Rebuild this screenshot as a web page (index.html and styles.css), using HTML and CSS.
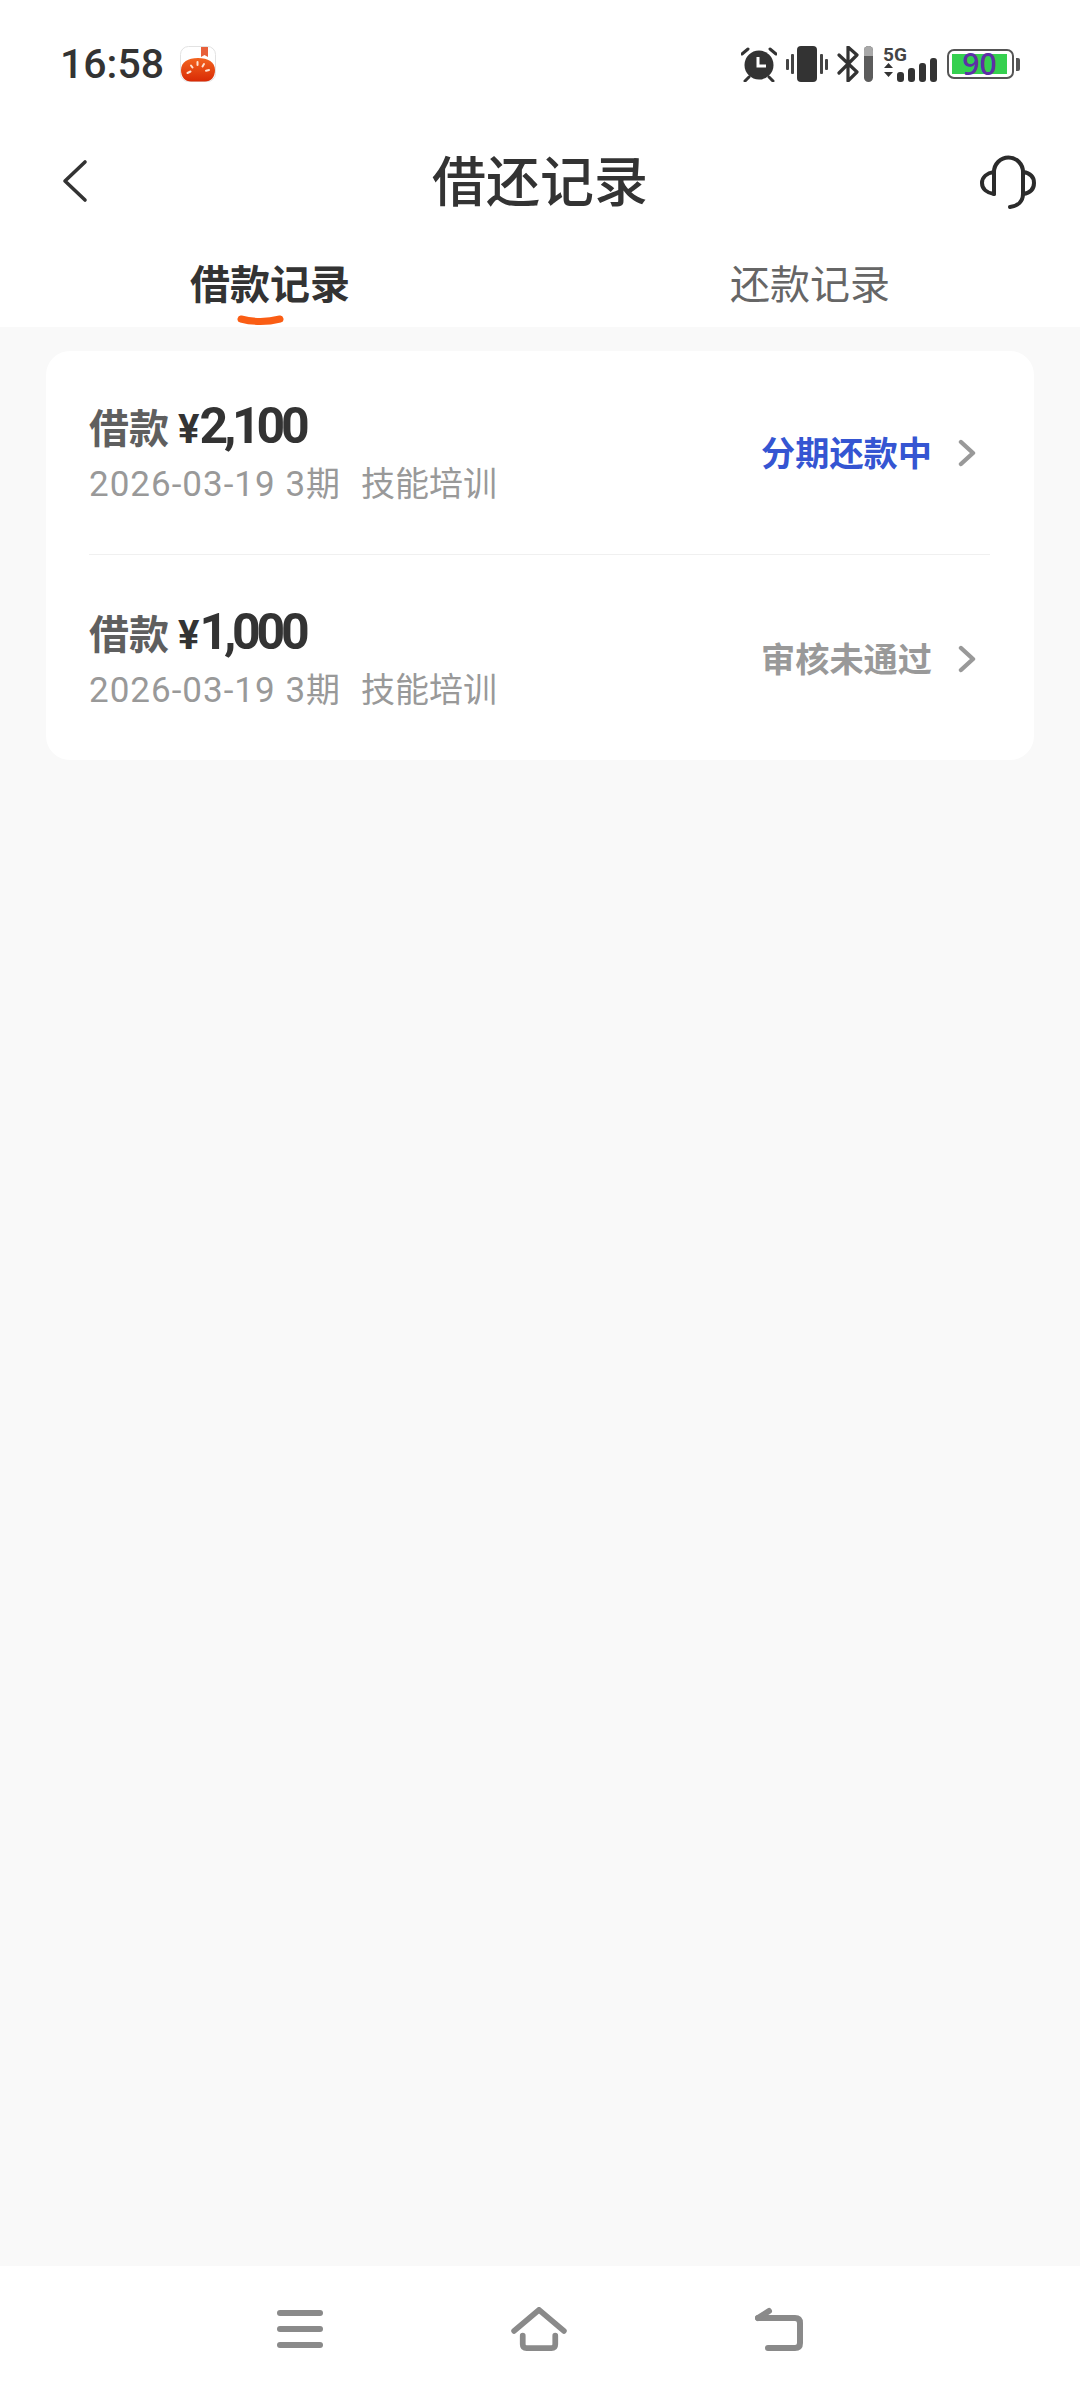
FILE: index.html
```html
<!DOCTYPE html>
<html lang="zh-CN">
<head>
    <meta charset="UTF-8">
    <meta name="viewport" content="width=device-width, initial-scale=1.0">
    <title>借还记录</title>
    <link rel="stylesheet" href="styles.css">
</head>
<body>
    <div class="status-bar">
        <div class="status-left">
            <span class="clock">16:58</span>
            <svg class="app-icon" width="36" height="36" viewBox="0 0 36 36">
                <defs>
                    <linearGradient id="tomato" x1="0" y1="0" x2="0" y2="1">
                        <stop offset="0" stop-color="#f2641f"/>
                        <stop offset="1" stop-color="#d92a05"/>
                    </linearGradient>
                </defs>
                <rect x="0.5" y="0.5" width="35" height="35" rx="8" fill="#fff" stroke="#e2e2e2"/>
                <path d="M21 1h7v10l-3.500-2-3.500 2z" fill="#e8603a"/>
                <path d="M1 24c0-8 7-12 17-12s17 4 17 12c0 7-4 11.500-10 11.500H11C5 35.500 1 31 1 24z" fill="url(#tomato)"/>
                <g stroke="#ffe3d2" stroke-width="2" stroke-linecap="round">
                    <path d="M17.500 16v3"/>
                    <path d="M24 18l-1.500 2.500"/>
                    <path d="M29 24l-3 .8"/>
                    <path d="M11 19.500l1.500 2"/>
                    <path d="M7.500 27l3-1.500"/>
                </g>
            </svg>
        </div>
        <div class="status-right">
            <svg width="36" height="36" viewBox="0 0 36 36">
                <circle cx="18" cy="19" r="14.500" fill="#333"/>
                <path d="M17 11v9h8" fill="none" stroke="#fff" stroke-width="3"/>
                <g stroke="#333" stroke-width="3" stroke-linecap="round">
                    <path d="M1 8l6-5"/>
                    <path d="M35 8l-6-5"/>
                    <path d="M8 31l-4 4"/>
                    <path d="M28 31l4 4"/>
                </g>
            </svg>
            <svg width="42" height="36" viewBox="0 0 42 36">
                <rect x="11" y="0" width="20" height="36" rx="4" fill="#333"/>
                <rect x="0" y="13" width="3" height="11" rx="1" fill="#444"/>
                <rect x="5" y="8" width="3" height="20" rx="1" fill="#444"/>
                <rect x="34" y="8" width="3" height="20" rx="1" fill="#444"/>
                <rect x="39" y="13" width="3" height="11" rx="1" fill="#444"/>
            </svg>
            <svg width="36" height="36" viewBox="0 0 36 36">
                <path d="M2 9l18 17-9 9V1l9 8L2 27" fill="none" stroke="#333" stroke-width="3.200" stroke-linejoin="round" stroke-linecap="round"/>
                <rect x="27" y="0" width="9" height="36" rx="4.500" fill="#5c5c5c"/>
                <path d="M27 10V4.500a4.500 4.500 0 0 1 9 0V10z" fill="#a8a8a8"/>
            </svg>
            <div class="net">
                <span class="net-label">5G</span>
                <svg width="54" height="24" viewBox="0 0 54 24">
                    <path d="M1 10l4.500-5 4.500 5zM1 14h9l-4.500 5z" fill="#333"/>
                    <rect x="14" y="14" width="7" height="10" rx="3" fill="#333"/>
                    <rect x="25" y="10" width="7" height="14" rx="3" fill="#333"/>
                    <rect x="36" y="5" width="7" height="19" rx="3" fill="#333"/>
                    <rect x="47" y="0" width="7" height="24" rx="3" fill="#333"/>
                </svg>
            </div>
            <div class="battery">
                <div class="battery-body">
                    <div class="battery-fill"><span>90</span></div>
                </div>
                <div class="battery-tip"></div>
            </div>
        </div>
    </div>

    <div class="title-bar">
        <svg class="back-icon" width="26" height="44" viewBox="0 0 26 44">
            <path d="M23 3L3 22l20 19" fill="none" stroke="#333" stroke-width="3.600" stroke-linecap="round" stroke-linejoin="round"/>
        </svg>
        <h1>借还记录</h1>
        <svg class="help-icon" width="56" height="56" viewBox="0 0 56 56">
            <g fill="none" stroke="#2b2b2b" stroke-width="4" stroke-linecap="round" stroke-linejoin="round">
                <path d="M14 41V19a14.500 14.500 0 0 1 29 0v22c0 7-5 12-13 13"/>
                <path d="M14 19C7 20 2 24 2 30s5 10 12 11"/>
                <path d="M43 19c7 1 11 5 11 11s-4 10-11 11"/>
            </g>
        </svg>
    </div>

    <div class="tabs">
        <div class="tab tab-active">借款记录
            <svg class="tab-line" width="47" height="12" viewBox="0 0 47 12">
                <path d="M4 4Q23.500 9 43 4" fill="none" stroke="#fa5d14" stroke-width="7" stroke-linecap="round"/>
            </svg>
        </div>
        <div class="tab">还款记录</div>
    </div>

    <div class="content">
        <div class="card">
            <div class="row">
                <div class="row-main">
                    <div class="row-title"><span class="row-label">借款</span><span class="row-yen">¥</span><span class="row-amount">2,100</span></div>
                    <div class="row-sub"><span class="row-date">2026-03-19 3</span>期<span class="row-use">技能培训</span></div>
                </div>
                <div class="row-state state-repaying">分期还款中</div>
                <svg class="row-arrow" width="18" height="28" viewBox="0 0 18 28">
                    <path d="M3 3l12 11L3 25" fill="none" stroke="#999" stroke-width="4.400" stroke-linecap="round" stroke-linejoin="round"/>
                </svg>
            </div>
            <div class="row">
                <div class="row-main">
                    <div class="row-title"><span class="row-label">借款</span><span class="row-yen">¥</span><span class="row-amount">1,000</span></div>
                    <div class="row-sub"><span class="row-date">2026-03-19 3</span>期<span class="row-use">技能培训</span></div>
                </div>
                <div class="row-state state-rejected">审核未通过</div>
                <svg class="row-arrow" width="18" height="28" viewBox="0 0 18 28">
                    <path d="M3 3l12 11L3 25" fill="none" stroke="#999" stroke-width="4.400" stroke-linecap="round" stroke-linejoin="round"/>
                </svg>
            </div>
        </div>
    </div>

    <div class="nav-bar">
        <svg width="46" height="38" viewBox="0 0 46 38">
            <g stroke="#8a8a8a" stroke-width="6" stroke-linecap="round">
                <path d="M3 3h40"/>
                <path d="M3 19h40"/>
                <path d="M3 35h40"/>
            </g>
        </svg>
        <svg class="nav-home" width="56" height="44" viewBox="0 0 58 46">
            <g fill="none" stroke="#8a8a8a" stroke-width="6" stroke-linecap="round" stroke-linejoin="round">
                <path d="M3 25L29 3l26 22"/>
                <path d="M12 30v9q0 4 4 4h26q4 0 4-4v-9"/>
            </g>
        </svg>
        <svg width="48" height="44" viewBox="0 0 48 44">
            <g fill="none" stroke="#8a8a8a" stroke-width="6" stroke-linecap="round" stroke-linejoin="round">
                <path d="M3 11h37q5 0 5 5v20q0 5-5 5H13"/>
                <path d="M3 11l11-7"/>
            </g>
        </svg>
    </div>
</body>
</html>
```

FILE: styles.css
```css
* {
    margin: 0;
    padding: 0;
    box-sizing: border-box;
}

body {
    width: 1080px;
    height: 2392px;
    display: flex;
    flex-direction: column;
    font-family: "Noto Sans CJK SC", "Noto Sans", sans-serif;
    background: #fff;
    color: #333;
}

.status-bar {
    height: 112px;
    padding: 16px 60px 0 60px;
    display: flex;
    align-items: center;
    justify-content: space-between;
}

.status-left {
    display: flex;
    align-items: center;
    gap: 16px;
}

.clock {
    font-family: Roboto, sans-serif;
    font-size: 41px;
    font-weight: 500;
    color: #333;
}

.status-right {
    display: flex;
    align-items: center;
    gap: 9px;
}

.net {
    width: 54px;
    height: 36px;
    margin-left: 1px;
    position: relative;
}

.net svg {
    position: absolute;
    left: 0;
    bottom: 0;
}

.net-label {
    position: absolute;
    left: 0;
    top: -3px;
    font-family: Roboto, sans-serif;
    font-size: 19px;
    font-weight: 700;
    color: #444;
}

.battery {
    display: flex;
    align-items: center;
    gap: 2px;
    margin-left: 1px;
}

.battery-body {
    width: 67px;
    height: 30px;
    padding: 3px;
    border: 2px solid #555;
    border-radius: 7px;
}

.battery-fill {
    width: 55px;
    height: 20px;
    background: #35d04f;
    display: flex;
    align-items: center;
    justify-content: center;
}

.battery-fill span {
    font-family: "Open Sans", sans-serif;
    font-size: 30px;
    font-weight: 600;
    line-height: 20px;
    color: #5e2fa6;
}

.battery-tip {
    width: 4px;
    height: 13px;
    background: #555;
    border-radius: 0 2px 2px 0;
}

.title-bar {
    height: 140px;
    padding: 0 44px 3px 62px;
    display: flex;
    align-items: center;
    justify-content: space-between;
    position: relative;
}

.title-bar h1 {
    position: absolute;
    left: 0;
    right: 0;
    padding-bottom: 4px;
    text-align: center;
    font-size: 54px;
    font-weight: 500;
    color: #333;
}

.tabs {
    height: 75px;
    display: grid;
    grid-template-columns: 1fr 1fr;
}

.tab {
    position: relative;
    text-align: center;
    font-size: 40px;
    line-height: 61px;
    color: #666;
}

.tab-active {
    font-weight: 700;
    color: #333;
}

.tab-line {
    position: absolute;
    left: 237px;
    bottom: 0;
}

.content {
    flex: 1;
    padding: 24px 46px 0;
    background: #f9f9f9;
}

.card {
    padding: 0 44px 0 43px;
    background: #fff;
    border-radius: 24px;
}

.row {
    height: 204px;
    display: flex;
    align-items: center;
    border-bottom: 1px solid #f0f0f0;
    padding-right: 14px;
}

.row:last-child {
    height: 205px;
    padding-top: 2px;
    border-bottom: none;
}

.row-main {
    flex: 1;
}

.row-title {
    display: flex;
    align-items: baseline;
    height: 60px;
    padding-top: 2px;
    color: #333;
}

.row-label {
    font-size: 40px;
    font-weight: 700;
    color: #5f5f5f;
    margin-right: 9px;
}

.row-yen {
    font-family: Roboto, sans-serif;
    font-size: 40px;
    font-weight: 700;
}

.row-amount {
    font-family: Roboto, sans-serif;
    font-size: 50px;
    font-weight: 700;
    letter-spacing: -4.200px;
}

.row-sub {
    margin-top: 2px;
    font-size: 34px;
    line-height: 50px;
    color: #999;
}

.row-date {
    font-family: Roboto, sans-serif;
    font-size: 35px;
    letter-spacing: 1px;
}

.row-use {
    margin-left: 21px;
}

.row-state {
    font-size: 34.200px;
    font-weight: 700;
    margin-right: 26px;
    padding-bottom: 4px;
}

.state-repaying {
    color: #3555d2;
}

.state-rejected {
    color: #999;
}

.nav-bar {
    height: 126px;
    display: grid;
    grid-template-columns: 46px 56px 48px;
    justify-content: center;
    align-items: center;
    column-gap: 188px;
}
```
